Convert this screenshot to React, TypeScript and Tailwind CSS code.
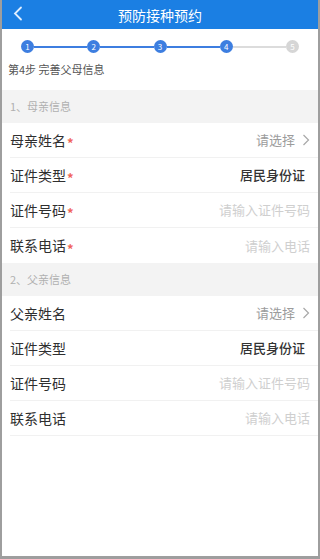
import React from 'react'

const font = { fontFamily: '"Noto Sans CJK SC", "Noto Sans", sans-serif' }

function Step({ n, active }: { n: number; active: boolean }) {
  return (
    <div
      className={`flex h-[13px] w-[13px] shrink-0 items-center justify-center rounded-full text-[8px] leading-none text-white ${
        active ? 'bg-[#3d7ee0]' : 'bg-[#d6d6d6]'
      }`}
    >
      {n}
    </div>
  )
}

function Line({ active }: { active: boolean }) {
  return <div className={`h-[2px] flex-1 ${active ? 'bg-[#3d7ee0]' : 'bg-[#dcdcdc]'}`} />
}

function Row({
  label,
  required,
  value,
  kind,
  last,
}: {
  label: string
  required?: boolean
  value: string
  kind: 'select' | 'filled' | 'input'
  last?: boolean
}) {
  return (
    <div className="pl-2">
      <div
        className={`flex h-[35px] items-center pr-2 ${last ? '' : 'border-b border-[#f1f1f1]'}`}
      >
        <div className="flex items-center text-[14px] text-[#2f2f2f]">
          <span>{label}</span>
          {required && (
            <span className="ml-[1px] mt-[5px] text-[13px] font-bold leading-none text-[#f0655a]">*</span>
          )}
        </div>
        <div className="ml-auto flex items-center">
          {kind === 'select' && (
            <>
              <span className="text-[13px] text-[#9c9c9c]">{value}</span>
              <svg className="ml-[7px] h-[12px] w-[8px]" viewBox="0 0 8 12" fill="none">
                <path d="M1.5 1l5 5-5 5" stroke="#a8a8a8" strokeWidth="1.2" />
              </svg>
            </>
          )}
          {kind === 'filled' && <span className="mr-[5px] text-[13px] font-medium text-[#333]">{value}</span>}
          {kind === 'input' && <span className="text-[13px] text-[#cfcfcf]">{value}</span>}
        </div>
      </div>
    </div>
  )
}

function Section({ title }: { title: string }) {
  return (
    <div className="flex h-[33px] items-center bg-[#f3f3f3] pl-2 text-[11px] text-[#b0b0b0]">
      {title}
    </div>
  )
}

export default function App() {
  return (
    <div className="flex h-[559px] w-[320px] flex-col overflow-hidden border-x-2 border-b-[3px] border-[#9e9e9e] bg-white" style={font}>
      <header className="relative flex h-[29px] shrink-0 items-center justify-center bg-[#1b7fe3]">
        <svg className="absolute left-[11px] top-[6px] h-[15px] w-[10px]" viewBox="0 0 10 15" fill="none">
          <path d="M8 1.5L2 7.5l6 6" stroke="#dfeeff" strokeWidth="1.8" strokeLinecap="round" />
        </svg>
        <h1 className="text-[14px] leading-none text-white">预防接种预约</h1>
      </header>

      <div className="flex h-[61px] shrink-0 flex-col">
        <div className="mt-[11px] flex items-center px-[19px]">
          <Step n={1} active />
          <Line active />
          <Step n={2} active />
          <Line active />
          <Step n={3} active />
          <Line active />
          <Step n={4} active />
          <Line active={false} />
          <Step n={5} active={false} />
        </div>
        <p className="mt-[8px] pl-[6px] text-[11px] text-[#555]">第4步 完善父母信息</p>
      </div>

      <Section title="1、母亲信息" />
      <Row label="母亲姓名" required value="请选择" kind="select" />
      <Row label="证件类型" required value="居民身份证" kind="filled" />
      <Row label="证件号码" required value="请输入证件号码" kind="input" />
      <Row label="联系电话" required value="请输入电话" kind="input" last />

      <Section title="2、父亲信息" />
      <Row label="父亲姓名" value="请选择" kind="select" />
      <Row label="证件类型" value="居民身份证" kind="filled" />
      <Row label="证件号码" value="请输入证件号码" kind="input" />
      <Row label="联系电话" value="请输入电话" kind="input" />
      <div className="flex-1" />
    </div>
  )
}
